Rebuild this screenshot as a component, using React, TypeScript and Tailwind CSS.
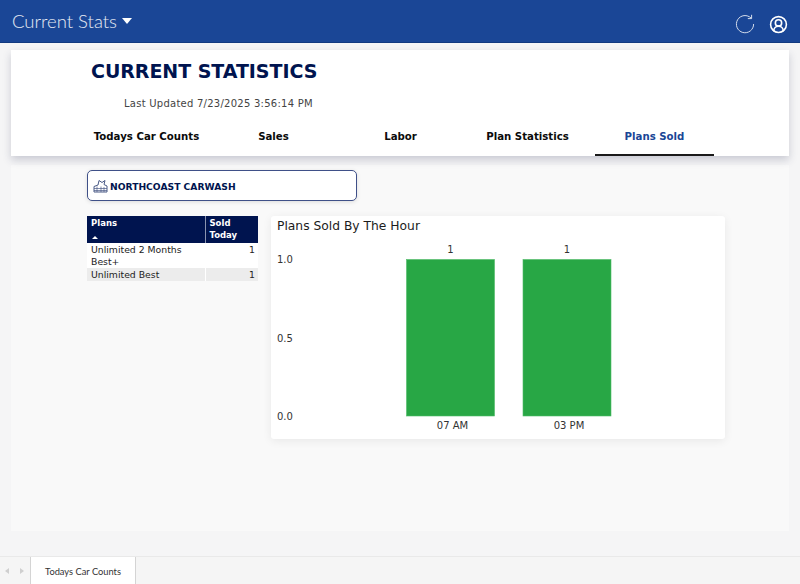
import { CircleUserRound } from "lucide-react";

const font = "font-['DejaVu_Sans',sans-serif]";

const tabs = ["Todays Car Counts", "Sales", "Labor", "Plan Statistics", "Plans Sold"];

const plans = [
  { name: "Unlimited 2 Months Best+", sold: 1 },
  { name: "Unlimited Best", sold: 1 },
];

const Header = () => (
  <header className="h-[43px] shrink-0 flex items-center justify-between bg-[#1a4696] border-b border-[#123a80] pl-3 pr-[12px]">
    <div className="flex items-center gap-[5px] text-white/90">
      <span className="font-['Lato',sans-serif] font-light text-[18.5px] leading-none">Current Stats</span>
      <span className="w-0 h-0 border-x-[5.5px] border-x-transparent border-t-[6px] border-t-white" />
    </div>
    <div className="flex items-center gap-[14px] mt-[6px]">
      <svg width="20" height="20" viewBox="0 0 20 20" fill="none" stroke="#d5ddec" strokeWidth="1">
        <path d="M16.2 4.2A8.6 8.6 0 1 0 18.6 10" />
        <path d="M16.6 0.8V4.6H12.8" />
      </svg>
      <CircleUserRound size={19} color="#ffffff" strokeWidth={2} />
    </div>
  </header>
);

const Tabs = () => (
  <nav className="flex gap-[8px] pl-[76px] h-[33px]">
    {tabs.map((t) => {
      const active = t === "Plans Sold";
      return (
        <div
          key={t}
          className={`w-[119px] flex items-start justify-center pt-[7px] text-[10.2px] leading-[14px] font-bold border-b-2 ${
            active ? "text-[#1a4696] border-[#1a1a1a]" : "text-[#0b0b0b] border-transparent"
          }`}
        >
          {t}
        </div>
      );
    })}
  </nav>
);

const PlansTable = () => (
  <table className="w-[171px] border-collapse table-fixed text-[9.3px] leading-[12px]">
    <thead>
      <tr className="bg-[#00144f] text-white h-[27px] text-[8.5px]">
        <th className="w-[118px] border-r border-[#8a94b0] px-[4px] pt-[1px] align-top text-left font-bold">
          <div>Plans</div>
          <div className="mt-[7px] ml-[1px] w-0 h-0 border-x-[3px] border-x-transparent border-b-[3px] border-b-white" />
        </th>
        <th className="pl-[4px] pr-[4px] pt-[1px] align-top text-left font-bold">Sold Today</th>
      </tr>
    </thead>
    <tbody className="text-[#222222]">
      {plans.map((p, i) => (
        <tr key={p.name} className={i % 2 ? "bg-[#ececec]" : "bg-white"}>
          <td className="border-r border-white pl-[4px] pr-[16px] pt-[1px] align-top">{p.name}</td>
          <td className="px-[3px] pt-[1px] align-top text-right">{p.sold}</td>
        </tr>
      ))}
    </tbody>
  </table>
);

const Chart = () => (
  <section className="w-[454px] h-[223px] bg-white rounded-[3px] shadow-[0_2px_10px_rgba(0,0,0,0.07)]">
    <h2 className="pl-[6px] pt-[2px] text-[12.3px] leading-[16px] font-normal text-[#1c1c1c]">Plans Sold By The Hour</h2>
    <svg width="454" height="205" viewBox="0 0 454 205" className="block" fontFamily="DejaVu Sans, sans-serif" fontSize="10" fill="#333333">
      <text x="6" y="29">1.0</text>
      <text x="6" y="108">0.5</text>
      <text x="6" y="186">0.0</text>
      <rect x="135.5" y="25.5" width="88" height="156.5" fill="#28a745" stroke="#4fbb68" strokeWidth="0.6" />
      <rect x="252" y="25.5" width="88" height="156.5" fill="#28a745" stroke="#4fbb68" strokeWidth="0.6" />
      <text x="179.5" y="19" textAnchor="middle">1</text>
      <text x="296" y="19" textAnchor="middle">1</text>
      <text x="181.5" y="195" textAnchor="middle">07 AM</text>
      <text x="298" y="195" textAnchor="middle">03 PM</text>
    </svg>
  </section>
);

const StoreIcon = () => (
  <svg width="15" height="14" viewBox="0 0 15 14" fill="none" stroke="#4a5a86" strokeWidth="1">
    <path d="M1 13V7.5L5 6L6 1.5L9 3.5L12 1.5L11 5.5L14 7V13Z" />
    <path d="M1 9.5H14M1 11.5H14M4 7.5V13M8 7.5V13M11 8V13" strokeWidth="0.7" />
  </svg>
);

export default function App() {
  return (
    <div className={`w-[800px] h-[584px] overflow-hidden flex flex-col bg-[#f5f5f6] ${font}`}>
      <Header />
      <main className="flex-1 min-h-0 flex flex-col px-[11px] pt-[7px]">
        <div className="h-[106px] shrink-0 flex flex-col justify-end bg-white shadow-[0_4px_8px_rgba(50,55,90,0.22)] relative z-10">
          <div className="pl-[80px] pt-[9px] flex-1">
            <h1 className="text-[19px] leading-[25px] font-bold text-[#00144f] tracking-[-0.05px]">CURRENT STATISTICS</h1>
            <p className="pl-[33px] pt-[14px] text-[10px] leading-[12px] tracking-[0.25px] text-[#444444]">Last Updated 7/23/2025 3:56:14 PM</p>
          </div>
          <Tabs />
        </div>
        <div className="mt-[9px] h-[366px] shrink-0 bg-[#f9f9f9] pl-[76px] pt-[5px]">
          <div className="w-[270px] h-[31px] flex items-center gap-[2px] pl-[5px] bg-white border border-[#3f5088] rounded-[5px] shadow-[0_1px_4px_rgba(0,0,0,0.12)] text-[9.2px] font-bold text-[#00144f]">
            <StoreIcon />
            <span className="mt-[2px]">NORTHCOAST CARWASH</span>
          </div>
          <div className="flex items-start gap-[13px] mt-[15px]">
            <PlansTable />
            <Chart />
          </div>
        </div>
      </main>
      <footer className="h-[28px] shrink-0 flex bg-[#f5f5f5] border-t border-[#e9e9e9] pl-[5px]">
        <div className="w-[25px] flex items-center gap-[11px]">
          <span className="w-0 h-0 border-y-[3px] border-y-transparent border-r-[4px] border-r-[#cfcfcf]" />
          <span className="w-0 h-0 border-y-[3px] border-y-transparent border-l-[4px] border-l-[#cfcfcf]" />
        </div>
        <div className="w-[106px] flex items-center justify-center pt-[2px] bg-white border-x border-[#d4d4d4] font-['Lato',sans-serif] text-[9.3px] text-[#333333]">
          Todays Car Counts
        </div>
      </footer>
    </div>
  );
}
